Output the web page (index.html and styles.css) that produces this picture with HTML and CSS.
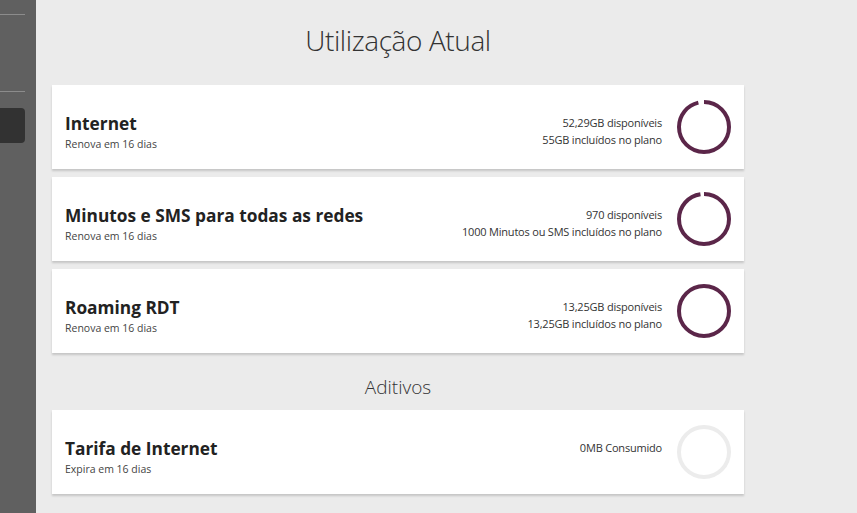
FILE: index.html
```html
<!DOCTYPE html>
<html lang="pt">
<head>
<meta charset="utf-8">
<title>Utilização Atual</title>
<link rel="stylesheet" href="styles.css">
</head>
<body>
<div class="app">
  <aside class="sidebar">
    <div class="side-line first"></div>
    <div class="side-line second"></div>
    <div class="side-btn"></div>
  </aside>
  <main class="main">
    <h1 class="page-title">Utilização Atual</h1>
    <div class="cards">
      <div class="card">
        <div class="info">
          <div class="name">Internet</div>
          <div class="sub">Renova em 16 dias</div>
        </div>
        <div class="usage">
          <div>52,29GB disponíveis</div>
          <div>55GB incluídos no plano</div>
        </div>
        <svg class="ring" viewBox="0 0 54 54" width="54" height="54">
          <circle cx="27" cy="27" r="25" fill="none" stroke="#5b2649" stroke-width="4" stroke-dasharray="150.3 157.08" transform="rotate(-90 27 27)"/>
        </svg>
      </div>
      <div class="card">
        <div class="info">
          <div class="name">Minutos e SMS para todas as redes</div>
          <div class="sub">Renova em 16 dias</div>
        </div>
        <div class="usage">
          <div>970 disponíveis</div>
          <div>1000 Minutos ou SMS incluídos no plano</div>
        </div>
        <svg class="ring" viewBox="0 0 54 54" width="54" height="54">
          <circle cx="27" cy="27" r="25" fill="none" stroke="#5b2649" stroke-width="4" stroke-dasharray="152.4 157.08" transform="rotate(-90 27 27)"/>
        </svg>
      </div>
      <div class="card">
        <div class="info">
          <div class="name">Roaming RDT</div>
          <div class="sub">Renova em 16 dias</div>
        </div>
        <div class="usage">
          <div>13,25GB disponíveis</div>
          <div>13,25GB incluídos no plano</div>
        </div>
        <svg class="ring" viewBox="0 0 54 54" width="54" height="54">
          <circle cx="27" cy="27" r="25" fill="none" stroke="#5b2649" stroke-width="4"/>
        </svg>
      </div>
    </div>
    <h2 class="section-title">Aditivos</h2>
    <div class="cards">
      <div class="card">
        <div class="info">
          <div class="name">Tarifa de Internet</div>
          <div class="sub">Expira em 16 dias</div>
        </div>
        <div class="usage single">
          <div>0MB Consumido</div>
        </div>
        <svg class="ring" viewBox="0 0 54 54" width="54" height="54">
          <circle cx="27" cy="27" r="25" fill="none" stroke="#ececec" stroke-width="4"/>
        </svg>
      </div>
    </div>
  </main>
</div>
</body>
</html>
```

FILE: styles.css
```css
* { box-sizing: border-box; }
html, body { margin: 0; padding: 0; }
body {
  background: #ebebeb;
  font-family: "Open Sans", "Liberation Sans", sans-serif;
  color: #333;
  width: 857px;
  height: 513px;
  overflow: hidden;
}
.app {
  display: flex;
  height: 513px;
}
.sidebar {
  width: 36px;
  flex: none;
  background: #606060;
  display: flex;
  flex-direction: column;
  padding-top: 14px;
}
.side-line {
  width: 25px;
  height: 1px;
  background: #8c8c8c;
}
.side-line.second { margin-top: 76px; }
.side-btn {
  margin-top: 16px;
  width: 25px;
  height: 35px;
  background: #323232;
  border-radius: 0 4px 4px 0;
}
.main {
  padding-left: 16px;
  width: 708px;
  display: flex;
  flex-direction: column;
}
.page-title {
  margin: 21px 0 0;
  height: 64px;
  text-align: center;
  font-weight: 300;
  font-size: 28px;
  line-height: 38px;
  color: #333;
  letter-spacing: -0.4px;
}
.cards {
  display: flex;
  flex-direction: column;
  gap: 8px;
}
.card {
  width: 692px;
  height: 84px;
  background: #fff;
  box-shadow: 0 2px 2px rgba(0,0,0,0.16);
  display: flex;
  align-items: center;
  padding: 0 13px;
}
.info { flex: 1; padding-top: 9px; }
.name {
  font-weight: 700;
  font-size: 17.3px;
  line-height: 22px;
  color: #222;
}
.sub {
  font-size: 10.5px;
  line-height: 14px;
  color: #444;
  margin-top: 2px;
}
.usage {
  text-align: right;
  font-size: 11px;
  line-height: 17px;
  color: #333;
  margin-right: 15px;
  letter-spacing: -0.2px;
  padding-top: 8px;
}
.usage.single div { margin-bottom: 17px; }
.ring { flex: none; display: block; }
.section-title {
  margin: 21px 0 0;
  height: 36px;
  text-align: center;
  font-weight: 300;
  font-size: 19px;
  line-height: 26px;
  color: #333;
}
```
